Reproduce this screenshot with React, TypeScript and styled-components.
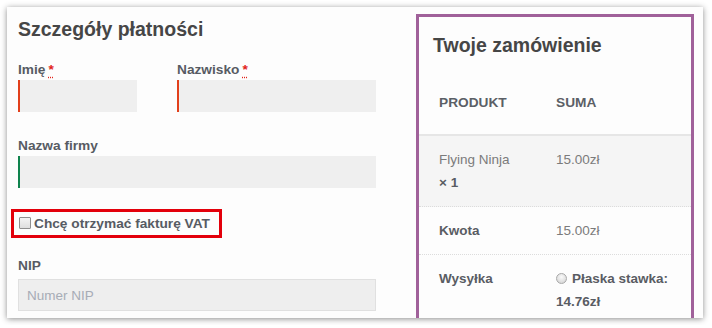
import React from 'react';
import styled, { createGlobalStyle } from 'styled-components';

const GlobalStyle = createGlobalStyle`
  html, body {
    margin: 0;
    padding: 0;
    background: #ffffff;
  }
  body {
    font-family: "Liberation Sans", Arial, sans-serif;
    -webkit-font-smoothing: antialiased;
  }
`;

const Frame = styled.div`
  margin: 7px;
  width: 696px;
  height: 311px;
  box-sizing: border-box;
  background: #fdfdfd;
  box-shadow: 0 1px 6px rgba(0, 0, 0, 0.45);
  overflow: hidden;
  display: grid;
  grid-template-columns: 409px 278px;
`;

const BillingColumn = styled.section`
  padding: 10px 0 0 11px;
  display: flex;
  flex-direction: column;
  align-items: flex-start;
`;

const Heading = styled.h3`
  margin: 0;
  font-size: 19.5px;
  line-height: 24px;
  font-weight: 700;
  color: #464646;
`;

const FieldRow = styled.div`
  display: grid;
  grid-template-columns: 119px 199px;
  column-gap: 40px;
  margin-top: 17.5px;
`;

const Field = styled.div<{ $mt?: number }>`
  display: flex;
  flex-direction: column;
  margin-top: ${p => p.$mt ?? 0}px;
`;

const Label = styled.label<{ $mb?: number }>`
  font-size: 13.7px;
  line-height: 21px;
  font-weight: 700;
  color: #575b63;
  margin-bottom: ${p => p.$mb ?? 0}px;
`;

const Required = styled.abbr`
  color: #e2231a;
  font-weight: 700;
  text-decoration: underline dotted #e2231a;
  text-underline-offset: 3px;
  margin-left: 3px;
`;

const Input = styled.div<{ $state?: 'invalid' | 'valid' | 'plain'; $width: number }>`
  width: ${p => p.$width}px;
  height: 32px;
  box-sizing: border-box;
  background: #efefef;
  border-left: 2px solid
    ${p => (p.$state === 'invalid' ? '#e2401c' : p.$state === 'valid' ? '#0f834d' : '#efefef')};
  ${p => p.$state === 'plain' && 'border: 1px solid #e0e0e0; background: #eeeeee;'}
  display: flex;
  align-items: center;
  padding-left: 8px;
  font-size: 13.5px;
  color: #a7acb6;
`;

const VatBox = styled.div`
  margin: 20.5px 0 0 -7px;
  width: 211px;
  height: 29px;
  box-sizing: border-box;
  border: 3px solid #e3000b;
  display: flex;
  align-items: center;
  padding-left: 5px;
  gap: 3px;
`;

const Checkbox = styled.span`
  width: 12px;
  height: 12px;
  box-sizing: border-box;
  border: 1px solid #8f8f8f;
  border-radius: 1px;
  background: linear-gradient(#f4f4f4, #dedede);
  flex-shrink: 0;
`;

const VatText = styled.span`
  font-size: 13.7px;
  line-height: 23px;
  font-weight: 700;
  color: #575b63;
  white-space: nowrap;
`;

const OrderBox = styled.aside`
  margin-top: 7px;
  border: 3px solid #a0619a;
  border-bottom: none;
  background: #fdfdfd;
`;

const OrderHeading = styled(Heading)`
  padding: 16px 14px 0;
  margin-bottom: 17px;
`;

const Row = styled.div<{ $shade?: boolean; $border?: 'solid' | 'dotted' | 'none' }>`
  display: grid;
  grid-template-columns: 117px 1fr;
  padding: 12px 20px;
  background: ${p => (p.$shade ? '#f5f5f5' : 'transparent')};
  border-bottom: ${p =>
    p.$border === 'solid' ? '2px solid #e6e6e6' : p.$border === 'dotted' ? '1px dotted #dcdcdc' : 'none'};
`;

const HeadRow = styled(Row)`
  padding: 18px 20px 20px;
`;

const Th = styled.div`
  font-size: 13.7px;
  line-height: 22px;
  font-weight: 700;
  color: #5b5f66;
`;

const Td = styled.div<{ $bold?: boolean }>`
  font-size: 13.5px;
  line-height: 23px;
  font-weight: ${p => (p.$bold ? 700 : 400)};
  color: ${p => (p.$bold ? '#595c63' : '#7b7b7b')};
`;

const Qty = styled.strong`
  display: block;
  color: #595c63;
`;

const ShippingOption = styled.div`
  font-size: 13.5px;
  line-height: 23px;
  font-weight: 700;
  color: #595c63;
`;

const Radio = styled.span`
  display: inline-block;
  width: 11px;
  height: 11px;
  box-sizing: border-box;
  border-radius: 50%;
  border: 1px solid #a9a9a9;
  background: radial-gradient(circle at 50% 35%, #fafafa, #cfcfcf);
  margin-right: 5px;
  vertical-align: -1px;
`;

const App: React.FC = () => {
  return (
    <>
      <GlobalStyle />
      <Frame>
        <BillingColumn>
          <Heading>Szczegóły płatności</Heading>

          <FieldRow>
            <Field>
              <Label>
                Imię<Required title="wymagane">*</Required>
              </Label>
              <Input $state="invalid" $width={119} />
            </Field>
            <Field>
              <Label>
                Nazwisko<Required title="wymagane">*</Required>
              </Label>
              <Input $state="invalid" $width={199} />
            </Field>
          </FieldRow>

          <Field $mt={23.5}>
            <Label>Nazwa firmy</Label>
            <Input $state="valid" $width={358} />
          </Field>

          <VatBox>
            <Checkbox />
            <VatText>Chcę otrzymać fakturę VAT</VatText>
          </VatBox>

          <Field $mt={17.5}>
            <Label $mb={3}>NIP</Label>
            <Input $state="plain" $width={358}>Numer NIP</Input>
          </Field>
        </BillingColumn>

        <OrderBox>
          <OrderHeading>Twoje zamówienie</OrderHeading>

          <HeadRow $border="solid">
            <Th>PRODUKT</Th>
            <Th>SUMA</Th>
          </HeadRow>

          <Row $shade $border="dotted">
            <Td>
              Flying Ninja
              <Qty>× 1</Qty>
            </Td>
            <Td>15.00zł</Td>
          </Row>

          <Row $border="dotted">
            <Td $bold>Kwota</Td>
            <Td>15.00zł</Td>
          </Row>

          <Row $border="none">
            <Td $bold>Wysyłka</Td>
            <div>
              <ShippingOption>
                <Radio />
                Płaska stawka: 14.76zł
              </ShippingOption>
              <ShippingOption>
                <Radio />
                Poczta Polska
              </ShippingOption>
            </div>
          </Row>
        </OrderBox>
      </Frame>
    </>
  );
};

export default App;
